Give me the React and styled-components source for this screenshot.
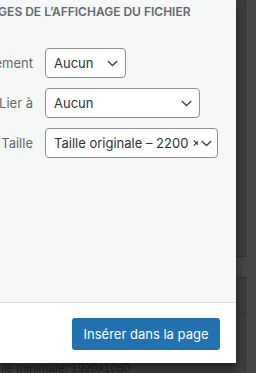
import React from 'react'
import styled, { createGlobalStyle } from 'styled-components'

const GlobalStyle = createGlobalStyle`
    html, body {
        margin: 0;
        padding: 0;
        background: #444444;
    }
    * {
        box-sizing: border-box;
    }
`

const Screen = styled.div`
    width: 256px;
    height: 373px;
    overflow: hidden;
    display: grid;
    grid-template-columns: 236px 1fr;
    grid-template-rows: 363px 1fr;
    background-color: #464646;
    font-family: Inter, "Liberation Sans", sans-serif;
`

const Modal = styled.div`
    grid-column: 1;
    grid-row: 1;
    z-index: 2;
    display: flex;
    flex-direction: column;
    box-shadow: 0 4px 10px rgba(0, 0, 0, 0.55);
`

const Sidebar = styled.div`
    flex: 1;
    background-color: #f6f7f7;
    border-bottom: 1px solid #dcdcde;
    padding-top: 4px;
`

const Heading = styled.h2`
    margin: 0 0 28px -41px;
    font-size: 12px;
    line-height: 16px;
    font-weight: 600;
    text-transform: uppercase;
    color: #646970;
    white-space: nowrap;
`

const Settings = styled.div`
    display: flex;
    flex-direction: column;
    gap: 10px;
`

const Row = styled.div`
    display: flex;
    align-items: center;
    gap: 12px;
`

const Label = styled.span`
    width: 33px;
    display: flex;
    justify-content: flex-end;
    white-space: nowrap;
    font-size: 13px;
    color: #646970;
`

const Select = styled.div`
    width: ${p => p.width}px;
    height: 30px;
    display: flex;
    align-items: center;
    padding: 0 ${p => p.pr || 7}px 0 8px;
    gap: 3px;
    background-color: #ffffff;
    border: 1px solid #8c8f94;
    border-radius: 4px;
`

const SelectText = styled.span`
    flex: 1;
    overflow: hidden;
    white-space: nowrap;
    font-size: 13px;
    color: #2c3338;
`

const Toolbar = styled.div`
    height: 60px;
    background-color: #ffffff;
    display: flex;
    align-items: center;
    justify-content: flex-end;
    padding: 1px 16px 0 0;
`

const Button = styled.button`
    height: 32px;
    padding: 0 11.5px;
    border: none;
    border-radius: 3px;
    background-color: #2271b1;
    color: #ffffff;
    font-family: inherit;
    font-size: 13px;
    cursor: pointer;
`

const Backdrop = styled.div`
    grid-column: 2;
    grid-row: 1 / span 2;
    display: flex;
    flex-direction: column;
`

const Panel = styled.div`
    width: 10px;
    height: ${p => p.h}px;
    margin-top: ${p => p.gap || 0}px;
    background-color: #3e3e3e;
    border-right: 1px solid #323232;
    border-top: ${p => (p.top ? '1px solid #323232' : 'none')};
    border-bottom: ${p => (p.bottom ? '1px solid #323232' : 'none')};
`

const Caption = styled.div`
    grid-column: 1;
    grid-row: 2;
    background-color: #3a3a3a;
    overflow: hidden;
    font-family: "Liberation Sans", sans-serif;
    font-size: 12px;
    line-height: 11px;
    color: #202020;
    white-space: nowrap;
    padding-left: 1px;
`

const Chevron = () => (
    <svg width="11" height="7" viewBox="0 0 11 7" fill="none">
        <polyline points="0.8,1 5.5,5.5 10.2,1" stroke="#3c434a" strokeWidth="1.3" />
    </svg>
)

const settings = [
    { label: 'Alignement', value: 'Aucun', width: 81 },
    { label: 'Lier à', value: 'Aucun', width: 155 },
    { label: 'Taille', value: 'Taille originale – 2200 × 1467', width: 173, pr: 5 },
]

const App = () => {
    return (
        <>
            <GlobalStyle />
            <Screen>
                <Modal>
                    <Sidebar>
                        <Heading>Réglages de l’affichage du fichier</Heading>
                        <Settings>
                            {settings.map(s => (
                                <Row key={s.label}>
                                    <Label>{s.label}</Label>
                                    <Select width={s.width} pr={s.pr}>
                                        <SelectText>{s.value}</SelectText>
                                        <Chevron />
                                    </Select>
                                </Row>
                            ))}
                        </Settings>
                    </Sidebar>
                    <Toolbar>
                        <Button>Insérer dans la page</Button>
                    </Toolbar>
                </Modal>
                <Backdrop>
                    <Panel h={263} bottom />
                    <Panel h={38} gap={20} top bottom />
                    <Panel h={60} />
                </Backdrop>
                <Caption>lle minimale: 1920x1080</Caption>
            </Screen>
        </>
    )
}

export default App
